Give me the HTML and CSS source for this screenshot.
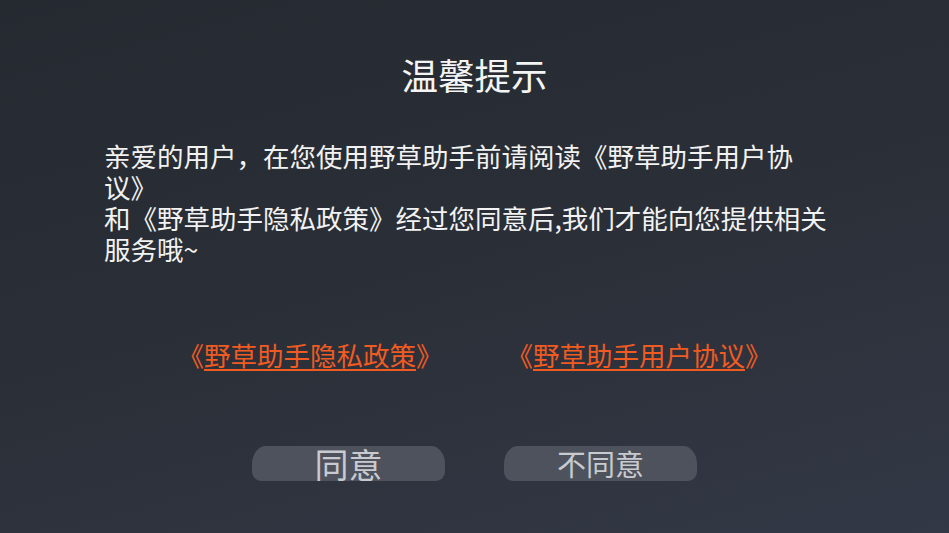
FILE: index.html
```html
<!DOCTYPE html>
<html lang="zh-CN">
<head>
<meta charset="utf-8">
<title>温馨提示</title>
<link rel="stylesheet" href="styles.css">
</head>
<body>
<div class="dialog">
  <h1 class="title">温馨提示</h1>
  <p class="content">亲爱的用户，在您使用野草助手前请阅读《野草助手用户协议》<br>和《野草助手隐私政策》经过您同意后,我们才能向您提供相关服务哦~</p>
  <div class="links">
    <a class="link" href="#"><span class="open">《</span><span class="link-text">野草助手隐私政策</span><span class="close">》</span></a>
    <a class="link" href="#"><span class="open">《</span><span class="link-text">野草助手用户协议</span><span class="close">》</span></a>
  </div>
  <div class="buttons">
    <div class="btn btn-agree">同意</div>
    <div class="btn btn-disagree">不同意</div>
  </div>
</div>
</body>
</html>
```

FILE: styles.css
```css
html, body {
  margin: 0;
  padding: 0;
}
body {
  width: 949px;
  height: 533px;
  overflow: hidden;
  font-family: "Noto Sans CJK SC", "Noto Sans", sans-serif;
}
.dialog {
  box-sizing: border-box;
  width: 949px;
  height: 533px;
  padding-top: 53px;
  background: linear-gradient(165deg, #252930 0%, #2a2e36 45%, #333846 100%);
  display: flex;
  flex-direction: column;
}
.title {
  margin: 0;
  font-size: 36.5px;
  line-height: 44px;
  font-weight: normal;
  color: #f4f4f4;
  text-align: center;
}
.content {
  margin: 43px 0 0 104px;
  width: 738px;
  font-size: 26.5px;
  line-height: 31px;
  color: #f2f2f2;
}
.links {
  margin-top: 76px;
  display: flex;
  justify-content: center;
  gap: 88px;
}
.link {
  flex: none;
  white-space: nowrap;
  font-size: 26.5px;
  line-height: 30px;
  color: #f05b22;
  text-decoration: none;
}
.open {
  margin-left: -12px;
}
.close {
  margin-right: -12px;
}
.link-text {
  text-decoration: underline;
  text-decoration-thickness: 2px;
  text-underline-offset: 3px;
}
.buttons {
  margin-top: 76px;
  display: flex;
  justify-content: center;
  gap: 59px;
}
.btn {
  width: 193px;
  height: 35px;
  line-height: 35px;
  background: #4e525c;
  color: #c8cacf;
  text-align: center;
  border-radius: 14px 14px 9px 9px / 18px 18px 9px 9px;
}
.btn-agree {
  font-size: 34px;
}
.btn-disagree {
  font-size: 29px;
}
```
